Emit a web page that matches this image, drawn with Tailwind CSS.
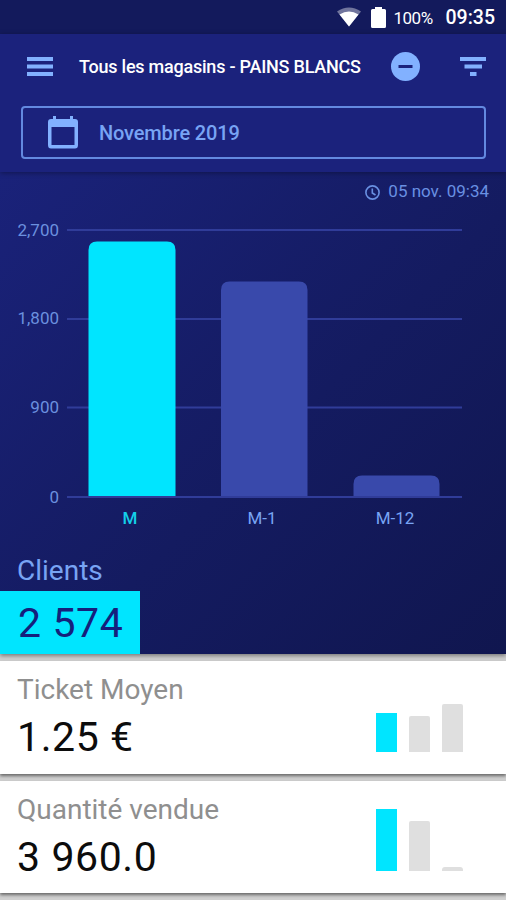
<!DOCTYPE html>
<html lang="fr">
<head>
  <meta charset="UTF-8" />
  <meta name="viewport" content="width=device-width, initial-scale=1" />
  <title>Tous les magasins</title>
  <script src="https://cdn.jsdelivr.net/npm/@tailwindcss/browser@4"></script>
</head>
<body class="w-[506px] h-[900px] overflow-hidden flex flex-col bg-[#d0d0d0] font-['Roboto',sans-serif]">

  <!-- Status bar -->
  <div class="h-[34px] shrink-0 bg-[#131a5c] flex items-center justify-end pr-[11px] text-white">
    <svg class="w-6 h-5 mr-[10px]" viewBox="0 0 24 20">
      <path d="M0 4.500Q12-3.500 24 4.500L12 19.500Z" fill="#fff" fill-opacity=".4" />
      <path d="M2.500 7.500Q12 1.500 21.500 7.500L12 19.500Z" fill="#fff" />
    </svg>
    <svg class="w-[15px] h-[21px] mr-[8px]" viewBox="0 0 15 21">
      <path d="M4 0h7v2h2.500Q15 2 15 3.500v16Q15 21 13.500 21h-12Q0 21 0 19.500v-16Q0 2 1.500 2H4Z" fill="#fff" />
    </svg>
    <span class="text-[17px] leading-5 mt-px w-[40px] tracking-[-0.5px] mr-[12px] whitespace-nowrap">100%</span>
    <span class="text-[19.500px] leading-5 mt-[2px] font-medium whitespace-nowrap">09:35</span>
  </div>

  <!-- App bar -->
  <header class="h-[138px] shrink-0 bg-[#1b227c] relative z-10 shadow-[0_1px_5px_rgba(0,0,0,0.35)]">
    <div class="h-[65px] flex items-center pl-[27px] pr-[20px]">
      <svg class="w-[26px] h-[19px]" viewBox="0 0 26 19" fill="#82b1ff">
        <rect width="26" height="4" />
        <rect y="7.500" width="26" height="4" />
        <rect y="15" width="26" height="4" />
      </svg>
      <h1 class="ml-[26px] w-[312px] text-[18px] font-medium text-white whitespace-nowrap tracking-[-0.23px]">Tous les magasins - PAINS BLANCS</h1>
      <svg class="w-[29px] h-[29px]" viewBox="0 0 29 29">
        <circle cx="14.500" cy="14.500" r="14.500" fill="#82b1ff" />
        <rect x="7.500" y="13" width="14" height="3" fill="#1b227c" />
      </svg>
      <svg class="w-[26px] h-[19px] ml-auto" viewBox="0 0 26 19" fill="#82b1ff">
        <rect width="26" height="4" />
        <rect x="4.500" y="7.500" width="17.500" height="4" />
        <rect x="10" y="15" width="6.500" height="4" />
      </svg>
    </div>
    <div class="ml-[21px] mr-[20px] mt-[7px] h-[53px] border-2 border-[#6389e0] rounded-[4px] flex items-center pl-[25px]">
      <svg class="w-[30px] h-[33px]" viewBox="0 0 30 33">
        <path fill="#82b1ff" fill-rule="evenodd" d="M5 0H8V3H22V0H25V3H27Q30 3 30 6V29Q30 32.500 27 32.500H3Q0 32.500 0 29V6Q0 3 3 3H5ZM3.500 11V29H26.500V11Z" />
      </svg>
      <span class="ml-[21px] text-[20px] font-medium tracking-[-0.15px] text-[#78a4f4]">Novembre 2019</span>
    </div>
  </header>

  <!-- Main chart -->
  <main class="h-[482px] shrink-0 bg-[linear-gradient(135deg,#1a227a_0%,#141b60_55%,#10164f_100%)] relative flex flex-col shadow-[0_2px_4px_rgba(0,0,0,0.4)]">
    <div class="h-10 flex items-center justify-end pr-[17px] text-[#6990e2]">
      <svg class="w-[15px] h-[15px] mr-2" viewBox="0 0 15 15" fill="none" stroke="currentColor" stroke-width="1.600">
        <circle cx="7.500" cy="7.500" r="6.600" />
        <path d="M7.300 3.500V8L10.500 10" />
      </svg>
      <span class="text-[17px]">05 nov. 09:34</span>
    </div>

    <svg class="w-[506px] h-[328px] shrink-0" viewBox="0 212 506 328">
      <g stroke="#303c99" stroke-width="2">
        <path d="M67 230H462" />
        <path d="M67 319H462" />
        <path d="M67 407.500H462" />
      </g>
      <path d="M88.500 497V250Q88.500 241.500 97 241.500H167Q175.500 241.500 175.500 250V497Z" fill="#00e5ff" />
      <path d="M221 497V290Q221 281.500 229.500 281.500H299Q307.500 281.500 307.500 290V497Z" fill="#3949ab" />
      <path d="M353.500 497V484Q353.500 475.500 362 475.500H431Q439.500 475.500 439.500 484V497Z" fill="#3949ab" />
      <path d="M67 497H462" stroke="#303c99" stroke-width="2" />
      <g font-size="17" fill="#6b90df" text-anchor="end">
        <text x="59" y="236">2,700</text>
        <text x="59" y="324">1,800</text>
        <text x="59" y="413">900</text>
        <text x="59" y="503">0</text>
      </g>
      <g font-size="17" fill="#78a4f4" text-anchor="middle">
        <text x="130" y="524" fill="#13cfe9" font-weight="500">M</text>
        <text x="262" y="524">M-1</text>
        <text x="395" y="524">M-12</text>
      </g>
    </svg>

    <div class="pl-[17px] mt-[13px] h-[38px] leading-[35px] text-[28px] text-[#78a4f4]">Clients</div>
    <div class="w-[140px] h-[63px] bg-[#00e5ff] pl-[18px] leading-[64px] text-[41px] text-[#15207c] whitespace-nowrap tracking-[0.6px]">2 574</div>
  </main>

  <!-- Ticket Moyen -->
  <section class="mt-[7px] h-[113px] shrink-0 bg-white shadow-[0_2px_3px_rgba(0,0,0,0.5)] flex justify-between pl-[17px] pr-[43px]">
    <div class="pt-[11px]">
      <h2 class="text-[28px] leading-[36px] text-[#8f8f8f]">Ticket Moyen</h2>
      <p class="text-[41px] leading-[58px] text-[#0c0c0c] whitespace-nowrap tracking-[0.6px]">1.25 €</p>
    </div>
    <div class="flex items-end gap-3 pb-[22px]">
      <div class="w-[21px] h-[39px] bg-[#00e5ff]"></div>
      <div class="w-[21px] h-[36px] bg-[#dfdfdf] rounded-t-[2px]"></div>
      <div class="w-[21px] h-[48px] bg-[#dfdfdf] rounded-t-[2px]"></div>
    </div>
  </section>

  <!-- Quantité vendue -->
  <section class="mt-[7px] h-[112px] shrink-0 bg-white shadow-[0_2px_3px_rgba(0,0,0,0.5)] flex justify-between pl-[17px] pr-[43px]">
    <div class="pt-[10px]">
      <h2 class="text-[28px] leading-[37px] text-[#8f8f8f]">Quantité vendue</h2>
      <p class="text-[41px] leading-[58px] text-[#0c0c0c] whitespace-nowrap tracking-[0.6px]">3 960.0</p>
    </div>
    <div class="flex items-end gap-3 pb-[22px]">
      <div class="w-[21px] h-[62px] bg-[#00e5ff]"></div>
      <div class="w-[21px] h-[50px] bg-[#dfdfdf] rounded-t-[2px]"></div>
      <div class="w-[21px] h-[4px] bg-[#dfdfdf] rounded-t-[3px]"></div>
    </div>
  </section>

</body>
</html>
